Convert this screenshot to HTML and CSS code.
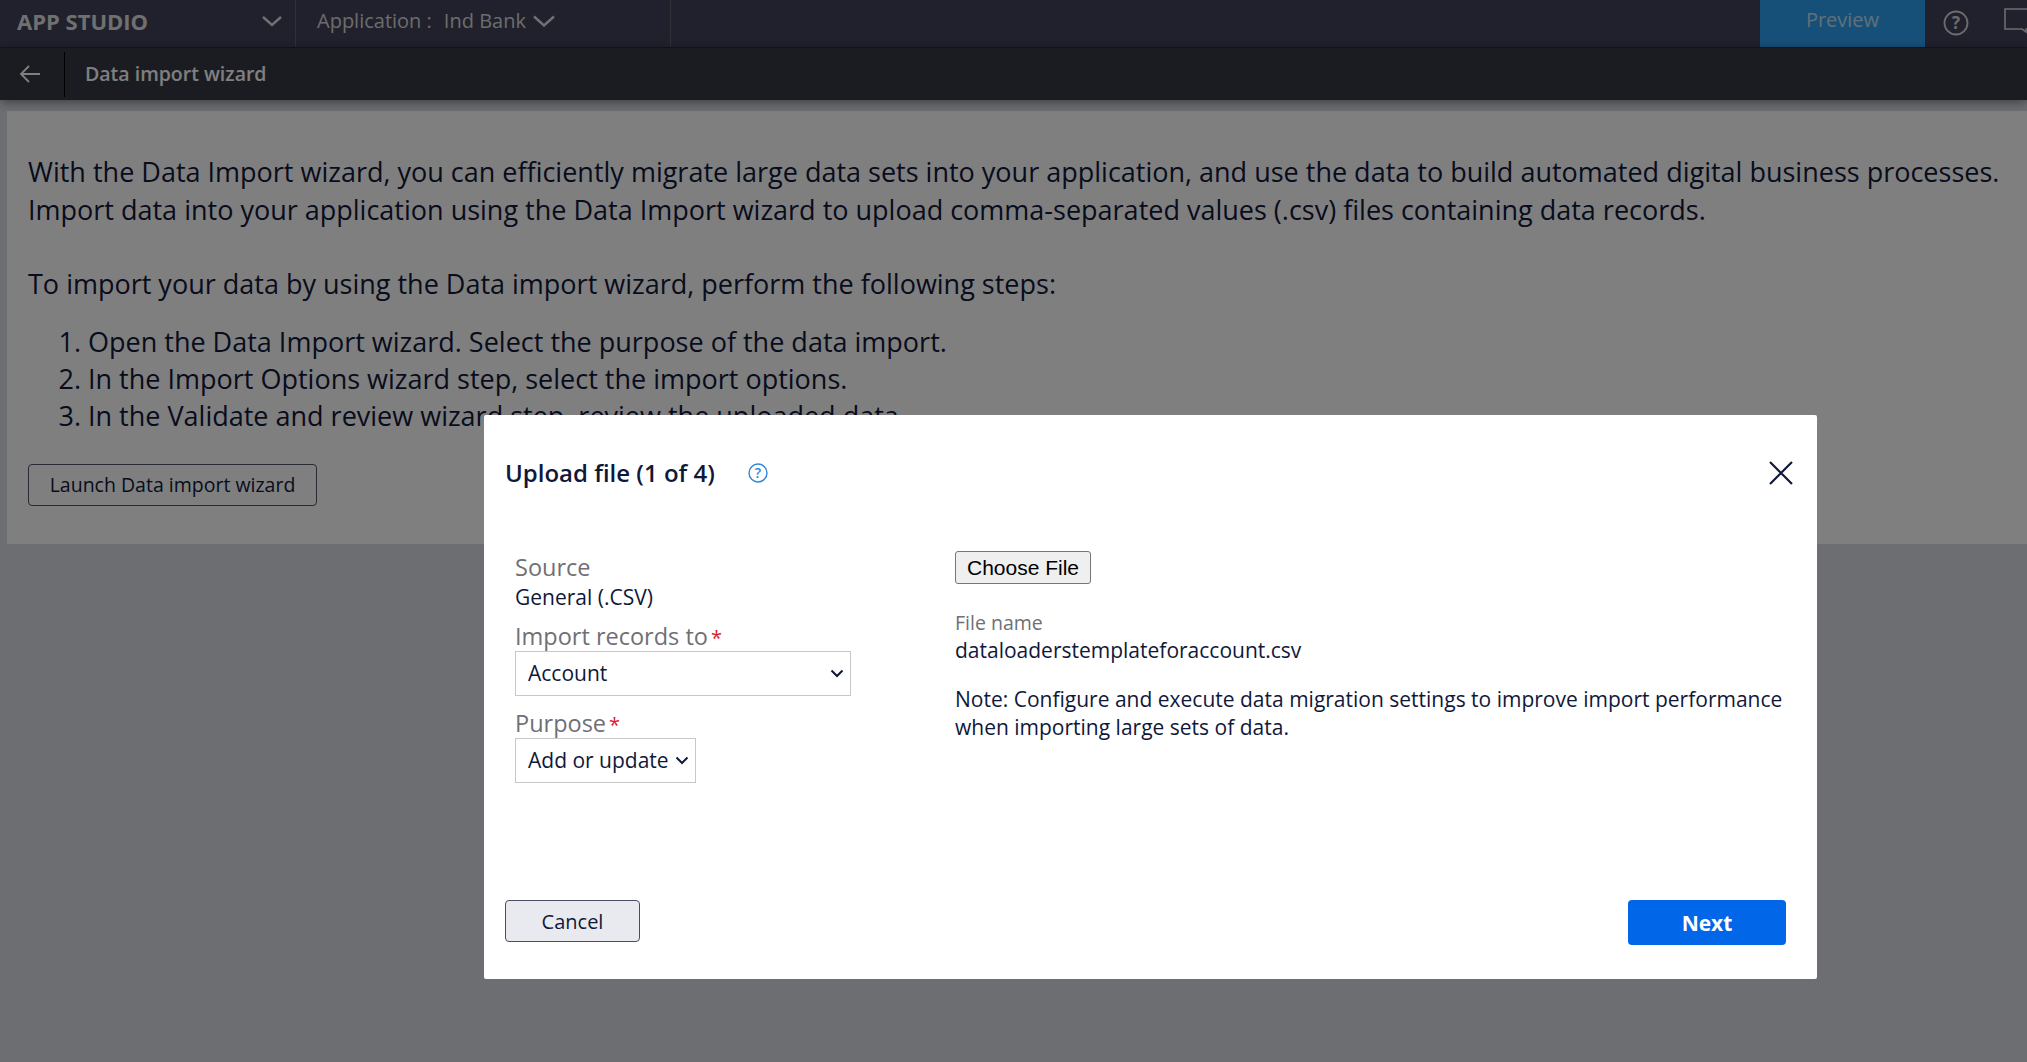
FILE: index.html
```html
<!DOCTYPE html>
<html lang="en">
<head>
<meta charset="utf-8">
<title>Data import wizard</title>
<link rel="stylesheet" href="styles.css">
</head>
<body>
<header class="topbar">
  <div class="studio">
    <span class="studio-name">APP STUDIO</span>
    <svg class="chev" width="22" height="12" viewBox="0 0 22 12"><path d="M2 2l9 8 9-8" fill="none" stroke="#fff" stroke-width="2.4"/></svg>
  </div>
  <div class="app">
    <span class="app-label">Application :</span>
    <span class="app-name">Ind Bank</span>
    <svg class="chev" width="22" height="12" viewBox="0 0 22 12"><path d="M1 1.500l10 9 10-9" fill="none" stroke="#fff" stroke-width="2.4"/></svg>
  </div>
  <div class="spacer"></div>
  <button class="preview">Preview</button>
  <div class="help-wrap">
    <svg width="26" height="26" viewBox="0 0 26 26"><circle cx="13" cy="13" r="11.500" fill="none" stroke="#fff" stroke-width="1.800"/><text x="13" y="19" text-anchor="middle" class="q">?</text></svg>
  </div>
  <div class="chat-wrap">
    <svg width="28" height="28" viewBox="0 0 28 28"><path d="M1 2h24v20h-3l0 3-4-3H1z" fill="none" stroke="#fff" stroke-width="1.600"/></svg>
  </div>
</header>
<nav class="subbar">
  <div class="back">
    <svg width="22" height="18" viewBox="0 0 22 18"><path d="M21 9H2M10 1L2 9l8 8" fill="none" stroke="#fff" stroke-width="1.800"/></svg>
  </div>
  <div class="crumb">Data import wizard</div>
</nav>
<main class="content">
  <section class="card">
    <p class="para">With the Data Import wizard, you can efficiently migrate large data sets into your application, and use the data to build automated digital business processes. Import data into your application using the Data Import wizard to upload comma-separated values (.csv) files containing data records.</p>
    <p class="para steps-title">To import your data by using the Data import wizard, perform the following steps:</p>
    <ol class="steps">
      <li>Open the Data Import wizard. Select the purpose of the data import.</li>
      <li>In the Import Options wizard step, select the import options.</li>
      <li>In the Validate and review wizard step, review the uploaded data.</li>
    </ol>
    <button class="launch">Launch Data import wizard</button>
  </section>
</main>
<div class="backdrop"></div>
<div class="dialog">
  <div class="dialog-head">
    <h2 class="title">Upload file (1 of 4)</h2>
    <svg class="title-help" width="20" height="20" viewBox="0 0 20 20"><circle cx="10" cy="10" r="9" fill="none" stroke="#2f86d6" stroke-width="1.400"/><text x="10" y="15" text-anchor="middle" class="q-blue">?</text></svg>
    <svg class="close" width="26" height="26" viewBox="0 0 26 26"><path d="M2 2l22 22M24 2L2 24" fill="none" stroke="#10183a" stroke-width="2.200"/></svg>
  </div>
  <div class="dialog-body">
    <div class="col-left">
      <div class="label label-source">Source</div>
      <div class="value">General (.CSV)</div>
      <div class="label label-import">Import records to<span class="req">*</span></div>
      <select class="select select-wide"><option>Account</option></select>
      <div class="label label-purpose">Purpose<span class="req">*</span></div>
      <select class="select select-narrow"><option>Add or update</option></select>
    </div>
    <div class="col-right">
      <button class="choose">Choose File</button>
      <div class="file-label">File name</div>
      <div class="value">dataloaderstemplateforaccount.csv</div>
      <p class="note">Note: Configure and execute data migration settings to improve import performance when importing large sets of data.</p>
    </div>
  </div>
  <div class="dialog-foot">
    <button class="cancel">Cancel</button>
    <button class="next">Next</button>
  </div>
</div>
</body>
</html>
```
FILE: styles.css
```css
* { box-sizing: border-box; }
html, body { height: 100%; }
body {
  margin: 0;
  height: 1062px;
  overflow: hidden;
  background: #dadce2;
  font-family: "Open Sans", sans-serif;
  color: #10183a;
  position: relative;
}
button, select { font-family: inherit; }
.topbar {
  height: 48px;
  background: #404258;
  display: flex;
  align-items: stretch;
  border-bottom: 1px solid #2c2e3a;
  color: #fff;
}
.studio {
  width: 296px;
  padding: 0 12px 5px 17px;
  display: flex;
  align-items: center;
  justify-content: space-between;
  border-right: 1px solid #60626f;
}
.studio-name { font-size: 22px; font-weight: 700; color: #e0e0e0; }
.app {
  width: 375px;
  padding: 0 0 6px 21px;
  display: flex;
  align-items: center;
  gap: 7px;
  font-size: 20px;
  border-right: 1px solid #60626f;
  color: #d8d8d8;
}
.app-label { margin-right: 5px; }
.spacer { flex: 1; }
.preview {
  width: 165px;
  border: 0;
  background: #2ca0f3;
  color: #bfe0f5;
  font-size: 20px;
  padding: 0 0 8px;
}
.help-wrap { width: 62px; display: flex; align-items: center; justify-content: center; padding-bottom: 2px; }
.help-wrap svg { opacity: .8; }
.q { font: 700 17px "Open Sans", sans-serif; fill: #fff; }
.chat-wrap { width: 40px; padding: 7px 0 0 17px; overflow: hidden; }
.chat-wrap svg { opacity: .8; }
.chev { opacity: .85; flex: none; }
.subbar {
  height: 52px;
  background: #363845;
  display: flex;
  align-items: center;
  box-shadow: 0 2px 10px rgba(0,0,0,.45);
  position: relative;
}
.back {
  width: 65px;
  height: 45px;
  padding-left: 19px;
  display: flex;
  align-items: center;
  border-right: 1px solid #000;
}
.crumb { margin-left: 20px; padding-bottom: 2px; font-size: 19.500px; font-weight: 600; color: #fff; }
.content { padding: 11px 0 0 7px; }
.card {
  background: #fff;
  height: 433px;
  padding: 42px 0 0 21px;
}
.para {
  margin: 0;
  font-size: 27px;
  line-height: 37.500px;
  width: 1985px;
}
.steps-title { margin-top: 37px; }
.steps {
  margin: 20px 0 0;
  padding: 0 0 0 60px;
  font-size: 27px;
  line-height: 37px;
}
.launch {
  display: block;
  margin-top: 30px;
  width: 289px;
  height: 42px;
  background: #fff;
  border: 1px solid #505468;
  border-radius: 4px;
  font-size: 19.500px;
  color: #10183a;
  padding: 0 0 1px;
}
.backdrop {
  position: absolute;
  inset: 0;
  background: rgba(0,0,0,.5);
}
.dialog {
  position: absolute;
  left: 484px;
  top: 415px;
  width: 1333px;
  height: 564px;
  background: #fff;
  border-radius: 2px;
  padding: 0 21px 0 21px;
  display: flex;
  flex-direction: column;
  color: #000;
}
.dialog-head {
  height: 136px;
  padding-top: 36px;
  display: flex;
  align-items: flex-start;
  flex: none;
}
.title {
  margin: 0;
  font-size: 24px;
  line-height: 44px;
  font-weight: 600;
  color: #10183a;
}
.title-help { margin: 12px 0 0 33px; }
.q-blue { font: 600 14px "Open Sans", sans-serif; fill: #2f86d6; }
.close { margin: 9px 2px 0 auto; }
.dialog-body { display: flex; flex: 1; padding-left: 10px; }
.col-left { width: 440px; flex: none; }
.col-right { flex: 1; }
.label { font-size: 23.500px; line-height: 32px; color: #6f7075; }
.label-import { margin-top: 9px; font-weight: 500; }
.label-purpose { margin-top: 11px; font-weight: 500; }
.req { color: #e0182d; font-size: 20px; line-height: 1; margin-left: 3px; }
.value { font-size: 21px; line-height: 28px; color: #10183a; }
.select {
  display: block;
  height: 45px;
  appearance: none;
  background: #fff url("data:image/svg+xml,%3Csvg xmlns='http://www.w3.org/2000/svg' width='14' height='9' viewBox='0 0 14 9'%3E%3Cpath d='M1.500 1.500L7 7l5.500-5.500' fill='none' stroke='%2310183a' stroke-width='2'/%3E%3C/svg%3E") no-repeat right 6px center;
  border: 1px solid #c8c8c8;
  border-radius: 0;
  font-size: 21px;
  color: #10183a;
  padding: 0 0 2px 12px;
}
.select-wide { width: 336px; margin-top: -1px; }
.select-narrow { width: 181px; margin-top: -1px; }
.choose {
  display: block;
  width: 136px;
  height: 33px;
  background: #efefef;
  border: 1px solid #767676;
  border-radius: 3px;
  font: 21px "Liberation Sans", sans-serif;
  color: #000;
  padding: 0;
}
.file-label { margin-top: 26px; font-size: 19.500px; line-height: 26px; color: #6f7075; }
.note { margin: 21px 0 0; font-size: 21px; line-height: 28px; color: #10183a; }
.dialog-foot {
  flex: none;
  height: 79px;
  display: flex;
  justify-content: space-between;
  align-items: flex-start;
  padding-right: 10px;
}
.cancel {
  width: 135px;
  height: 42px;
  background: #e9eaef;
  border: 1px solid #4a4e62;
  border-radius: 4px;
  font-size: 20px;
  color: #10183a;
  padding: 0;
}
.next {
  width: 158px;
  height: 45px;
  background: #0166e8;
  border: 0;
  border-radius: 4px;
  color: #fff;
  font-size: 21px;
  font-weight: 700;
  padding: 0;
}
```
